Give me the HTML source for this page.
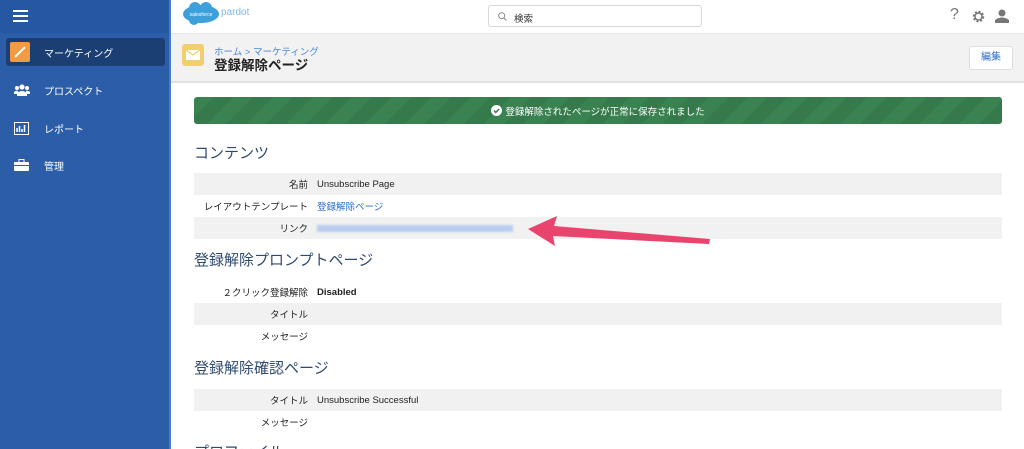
<!DOCTYPE html>
<html><head><meta charset="utf-8"><style>
*{box-sizing:border-box;margin:0;padding:0}
html,body{width:1024px;height:449px;overflow:hidden}
body{background:#fff;font-family:"Liberation Sans","Noto Sans CJK JP",sans-serif;position:relative}
.sb{position:absolute;left:0;top:0;width:171px;height:449px;background:#2b5da8;border-right:2px solid #4a7cc4}
.sbtop{height:33px;background:#2557a2}
.nav{position:absolute;left:6px;width:159px;height:28px;color:#fff;font-size:10px;display:flex;align-items:center}
.nav .ic{position:absolute;left:6px}
.nav span{position:absolute;left:38px}
.hdr{position:absolute;left:171px;top:0;right:0;height:33px;background:#fff}
.ph{position:absolute;left:171px;top:33px;right:0;height:50px;background:#f2f2f2;border-top:1px solid #e6e6e6;border-bottom:2px solid #e0e0e0}
.banner{position:absolute;left:194px;top:97px;width:808px;height:27px;border-radius:3px;background:repeating-linear-gradient(135deg,#3a8250 0 14px,#367a4b 14px 28px);color:#fff;font-size:9.5px;display:flex;align-items:center;justify-content:center}
h2{position:absolute;left:194px;font-weight:normal;font-size:15px;color:#2f4a6f}
.row{position:absolute;left:194px;width:808px;height:22px;font-size:9.5px;color:#222;display:flex;align-items:center}
.row.g{background:#f1f1f1}
.row .l{width:114px;text-align:right}
.row .v{margin-left:9px}
a{color:#2d6fcf;text-decoration:none}
</style></head><body>
<div class="sb"><div class="sbtop">
<div style="position:absolute;left:13px;top:10px;width:15px;height:2px;background:#fff;box-shadow:0 5px 0 #fff,0 10px 0 #fff"></div></div>
<div class="nav" style="top:38px;background:#1b3f73;border-radius:3px"><div class="ic" style="left:4px;width:20px;height:20px;background:#f39b43;border-radius:2px"><div style="position:absolute;left:9px;top:3px;width:2px;height:14px;background:#fff;transform:rotate(45deg)"></div></div><span>マーケティング</span></div>
<div class="nav" style="top:76px"><svg class="ic" width="16" height="12" viewBox="0 0 16 12" style="left:8px"><circle cx="8" cy="3" r="2.6" fill="#fff"/><circle cx="3" cy="4" r="2" fill="#fff"/><circle cx="13" cy="4" r="2" fill="#fff"/><path d="M3 12v-3q5-4 10 0v3z" fill="#fff"/><path d="M0 10v-2q2-2 4 -1v3zM16 10v-2q-2-2-4-1v3z" fill="#fff"/></svg><span>プロスペクト</span></div>
<div class="nav" style="top:114px"><svg class="ic" width="15" height="13" viewBox="0 0 15 13" style="left:8px"><rect x=".5" y=".5" width="14" height="12" fill="none" stroke="#fff"/><path d="M3 10V6M5.5 10V4M8 10V7M10.5 10V3" stroke="#fff" stroke-width="1.5"/></svg><span>レポート</span></div>
<div class="nav" style="top:151px"><svg class="ic" width="15" height="12" viewBox="0 0 15 12" style="left:8px"><rect x="0" y="3" width="15" height="9" rx="1" fill="#fff"/><rect x="5" y="0.5" width="5" height="3" fill="none" stroke="#fff"/><rect x="0" y="6" width="15" height="1" fill="#2b5da8"/></svg><span>管理</span></div>
</div>
<div class="hdr">
<svg width="38" height="24" viewBox="0 0 38 24" style="position:absolute;left:11px;top:2px"><ellipse cx="19" cy="12" rx="18" ry="9" fill="#3ea0db"/><circle cx="13" cy="6" r="6" fill="#3ea0db"/><circle cx="24" cy="6" r="6" fill="#3ea0db"/><circle cx="12" cy="18" r="5" fill="#3ea0db"/><text x="19" y="14" font-size="5" fill="#fff" text-anchor="middle" font-family="Liberation Sans">salesforce</text></svg>
<span style="position:absolute;left:50px;top:7px;font-size:10px;color:#7fb6e6">pardot</span>
<div style="position:absolute;left:317px;top:5px;width:214px;height:22px;border:1px solid #d8d8d8;border-radius:3px;font-size:9.5px;color:#333;padding:5px 0 0 25px">検索<svg width="9" height="9" viewBox="0 0 9 9" style="position:absolute;left:9px;top:6px"><circle cx="3.7" cy="3.7" r="3" fill="none" stroke="#888"/><path d="M6 6l2.5 2.5" stroke="#888"/></svg></div>
<span style="position:absolute;left:779px;top:6px;font-size:16px;color:#777">?</span>
<svg width="13" height="13" viewBox="0 0 13 13" style="position:absolute;left:801px;top:10px"><circle cx="6.5" cy="6.5" r="4.5" fill="none" stroke="#777" stroke-width="2.5" stroke-dasharray="2 1.5"/><circle cx="6.5" cy="6.5" r="3.5" fill="none" stroke="#777" stroke-width="1.5"/></svg>
<svg width="14" height="14" viewBox="0 0 14 14" style="position:absolute;left:824px;top:9px"><circle cx="7" cy="4" r="3.5" fill="#777"/><path d="M0 14v-3q7-5 14 0v3z" fill="#777"/></svg>
</div>
<div class="ph">
<div style="position:absolute;left:11px;top:10px;width:22px;height:22px;background:#f0cf6f;border-radius:3px"><svg width="14" height="10" viewBox="0 0 14 10" style="position:absolute;left:4px;top:6px"><rect width="14" height="10" fill="#fff"/><path d="M0 0l7 5 7-5" fill="none" stroke="#f0cf6f" stroke-width="1.3"/></svg></div>
<div style="position:absolute;left:43px;top:10px;font-size:9.5px;color:#4a87d4">ホーム &gt; マーケティング</div>
<div style="position:absolute;left:43px;top:20px;font-size:13.5px;font-weight:bold;color:#222">登録解除ページ</div>
<div style="position:absolute;right:11px;top:12px;width:44px;height:24px;background:#fff;border:1px solid #ddd;border-radius:3px;font-size:10px;color:#2d6fcf;text-align:center;line-height:22px">編集</div>
</div>
<div class="banner"><svg width="11" height="11" viewBox="0 0 11 11" style="margin-right:3px"><circle cx="5.5" cy="5.5" r="5.5" fill="#fff"/><path d="M3 5.6l1.8 1.8 3.3-3.4" fill="none" stroke="#3a8250" stroke-width="1.6"/></svg>登録解除されたページが正常に保存されました</div>
<h2 style="top:142px">コンテンツ</h2>
<div class="row g" style="top:173px"><div class="l">名前</div><div class="v">Unsubscribe Page</div></div>
<div class="row" style="top:195px"><div class="l">レイアウトテンプレート</div><div class="v"><a>登録解除ページ</a></div></div>
<div class="row g" style="top:217px"><div class="l">リンク</div><div class="v" style="width:196px;height:7px;background:#b8cdef;filter:blur(1px)"></div></div>
<h2 style="top:249px">登録解除プロンプトページ</h2>
<div class="row" style="top:281px"><div class="l">２クリック登録解除</div><div class="v" style="font-weight:bold">Disabled</div></div>
<div class="row g" style="top:303px"><div class="l">タイトル</div></div>
<div class="row" style="top:325px"><div class="l">メッセージ</div></div>
<h2 style="top:357px">登録解除確認ページ</h2>
<div class="row g" style="top:389px"><div class="l">タイトル</div><div class="v">Unsubscribe Successful</div></div>
<div class="row" style="top:411px"><div class="l">メッセージ</div></div>
<h2 style="top:441px">プロファイル</h2>
<svg width="1024" height="449" style="position:absolute;left:0;top:0" viewBox="0 0 1024 449"><path d="M528 229L557 216L554 226L710 239L709 244L553 236L555 246Z" fill="#e8446e"/></svg>
</body></html>
